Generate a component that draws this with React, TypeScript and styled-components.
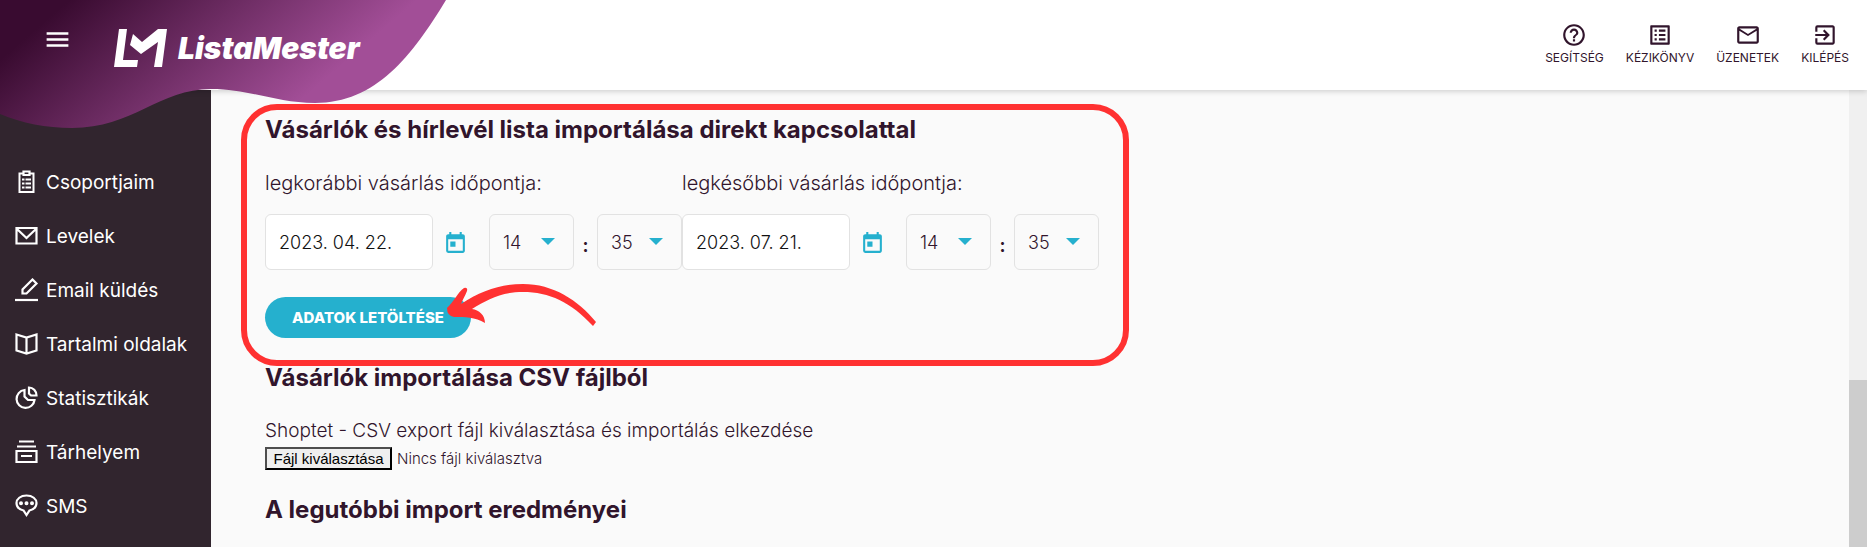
import React from 'react';
import styled, { createGlobalStyle } from 'styled-components';
import { MdMenu, MdHelpOutline, MdOutlineListAlt, MdOutlineMail, MdOutlineExitToApp, MdToday } from 'react-icons/md';

const GlobalStyle = createGlobalStyle`
  *, *::before, *::after { box-sizing: border-box; }
  body {
    margin: 0;
    background: #fafafa;
    color: #31152c;
    font-family: Inter, "Open Sans", sans-serif;
    font-size: 19px;
    font-weight: 300;
  }
  h2, p, ul { margin: 0; padding: 0; }
  button, input, select { font: inherit; color: inherit; margin: 0; }
`;

const Page = styled.div`
  position: relative;
  display: flex;
  flex-direction: column;
  min-height: 100vh;
`;

const Header = styled.header`
  position: relative;
  z-index: 1;
  display: flex;
  align-items: flex-start;
  justify-content: space-between;
  height: 90px;
  padding: 0 18px 0 43px;
  background: #fff;
  box-shadow: 0 1px 6px rgba(0, 0, 0, 0.2);
`;

const Wave = styled.svg`
  position: absolute;
  top: 0;
  left: 0;
`;

const Brand = styled.div`
  position: relative;
  display: flex;
  align-items: flex-start;
  gap: 42px;
  color: #fff;
`;

const MenuButton = styled.button`
  display: flex;
  margin-top: 25px;
  padding: 0;
  border: 0;
  background: none;
  color: #fff;
  cursor: pointer;
`;

const LogoLink = styled.a`
  display: flex;
  align-items: center;
  gap: 11px;
  margin-top: 29px;
  color: #fff;
  text-decoration: none;
  font-size: 30px;
  font-style: italic;
  font-weight: 900;
  line-height: 38px;
`;

const TopNav = styled.nav`
  display: flex;
  gap: 22px;
  padding-top: 22px;
`;

const TopLink = styled.a`
  display: flex;
  flex-direction: column;
  align-items: center;
  color: #31152c;
  font-size: 12px;
  font-weight: 400;
  line-height: 20px;
  text-decoration: none;
  text-transform: uppercase;
`;

const Body = styled.div`
  display: flex;
  flex: 1;
`;

const Sidebar = styled.nav`
  flex: none;
  width: 211px;
  padding-top: 65px;
  background: #31252e;
`;

const SideList = styled.ul`
  list-style: none;
`;

const SideLink = styled.a`
  display: flex;
  align-items: center;
  gap: 7px;
  height: 54px;
  padding-left: 15px;
  color: #fff;
  font-size: 19px;
  font-weight: 400;
  text-decoration: none;
  white-space: nowrap;
`;

const Content = styled.main`
  flex: 1;
  padding: 14px 30px;
`;

const Callout = styled.section`
  position: relative;
  width: 888px;
  height: 262px;
  padding: 8px 18px;
  border: 6px solid #ff3131;
  border-radius: 36px;
`;

const Section = styled.section`
  padding: 0 24px;
`;

const Title = styled.h2`
  font-size: 24px;
  font-weight: 700;
  line-height: 24px;
  white-space: nowrap;
`;

const DateRow = styled.div`
  display: flex;
  margin-top: 29px;
`;

const Moment = styled.fieldset`
  width: 417px;
  margin: 0;
  padding: 0;
  border: 0;
`;

const Caption = styled.label`
  display: block;
  font-size: 20px;
  line-height: 24px;
`;

const Fields = styled.div`
  display: flex;
  align-items: center;
  margin-top: 19px;
`;

const DateInput = styled.input`
  width: 168px;
  height: 56px;
  padding: 0 13px;
  border: 1px solid #e2e2e2;
  border-radius: 6px;
  background: #fff;
  color: #111;
  font-size: 18px;
`;

const CalendarButton = styled.button`
  display: flex;
  margin: 3px 21px 0 10px;
  padding: 0;
  border: 0;
  background: none;
  color: #25b0ce;
  cursor: pointer;
`;

const SelectBox = styled.div`
  position: relative;
  width: 85px;
`;

const Select = styled.select`
  width: 100%;
  height: 56px;
  padding: 0 13px;
  border: 1px solid #e2e2e2;
  border-radius: 6px;
  background: transparent;
  appearance: none;
  font-size: 18px;
`;

const Caret = styled.svg`
  position: absolute;
  top: 24px;
  right: 19px;
  pointer-events: none;
`;

const Colon = styled.span`
  width: 23px;
  padding-top: 6px;
  text-align: center;
  font-size: 18px;
  font-weight: 700;
`;

const PrimaryButton = styled.button`
  display: block;
  width: 206px;
  height: 41px;
  margin-top: 27px;
  padding: 0;
  border: 0;
  border-radius: 21px;
  background: #25b0ce;
  color: #fff;
  font-size: 15px;
  font-weight: 800;
  text-transform: uppercase;
  cursor: pointer;
`;

const Arrow = styled.svg`
  position: absolute;
  top: 172px;
  left: 198px;
`;

const FileRow = styled.div`
  display: flex;
  align-items: center;
  gap: 5px;
  margin-bottom: 28px;
  font-size: 15px;
  line-height: 19px;
`;

const FileInput = styled.input`
  position: absolute;
  width: 1px;
  height: 1px;
  opacity: 0;
`;

const FileLabel = styled.label`
  width: 127px;
  border: 2px outset #000;
  border-color: #4e4e4e #000 #000 #4e4e4e;
  background: #efefef;
  color: #000;
  font: 15px/19px "Liberation Sans", Arial, sans-serif;
  text-align: center;
`;

const FileIntro = styled.p`
  margin: 26px 0 1px;
  font-size: 19px;
  line-height: 30px;
`;

const ScrollTrack = styled.div`
  flex: none;
  width: 18px;
  padding-top: 290px;
  display: flex;
  background: #f0f0f0;
`;

const ScrollThumb = styled.div`
  flex: 1;
  background: #cdcdcd;
`;

const LogoMark = () => (
  <svg width="53" height="38" viewBox="0 0 53 38" fill="#fff" aria-hidden="true">
    <path d="M5 0h8L9 31h15l-1 7H0z" />
    <path d="M19 5l9 8L44 0h9l-5 38h-8l4-25-17 12L16 16z" />
  </svg>
);

type IconProps = { children: React.ReactNode };
const SideIcon = ({ children }: IconProps) => (
  <svg width="24" height="24" viewBox="0 0 24 24" fill="none" stroke="#fff" strokeWidth="2.2" aria-hidden="true">
    {children}
  </svg>
);

const sideItems = [
  {
    label: 'Csoportjaim',
    icon: (
      <>
        <path d="M8 3.500H4.500v18.500h14v-18.500H15" strokeWidth="2" />
        <path d="M8.500 1.500h6v3.500h-6z" />
        <path d="M7 9.500h2.500M10.500 9.500H16M7 13.500h2.500M10.500 13.500H16M7 17.500h2.500M10.500 17.500H16" strokeWidth="2" />
      </>
    ),
  },
  { label: 'Levelek', icon: <path d="M1.500 4h20v15.500h-20zM2 5l9.500 9L21 5" /> },
  {
    label: 'Email küldés',
    icon: (
      <>
        <path d="M0 22h23" />
        <path d="M7.500 15.500v-4L17.500 1.500l4 4L11.500 15.500z" />
      </>
    ),
  },
  { label: 'Tartalmi oldalak', icon: <path d="M1.500 2.500l10 3 10-3v16l-10 3-10-3zM11.500 5v17" /> },
  {
    label: 'Statisztikák',
    icon: (
      <>
        <path d="M9.500 4a9 9 0 1 0 10 10H13l-3.500-3.500z" />
        <path d="M14 1.500c4 0 7.500 3.500 7.500 8H16l-2-2z" />
      </>
    ),
  },
  { label: 'Tárhelyem', icon: <path d="M4 1.500h15M2 6.500h19M1.500 11h20v11h-20zM6 16h11" /> },
  {
    label: 'SMS',
    icon: (
      <>
        <path d="M11.500 1.500C5.500 1.500 1.500 5 1.500 9c0 4 3 6.500 7 7.500l3 4.500 3-4.500c4-1 7-3.500 7-7.500 0-4-4-7.500-10-7.500z" />
        <path d="M6 9.200h.01M11.500 9.200h.01M17 9.200h.01" strokeWidth="4" strokeLinecap="round" />
      </>
    ),
  },
];

type MomentProps = { id: string; caption: string; date: string };
const MomentField = ({ id, caption, date }: MomentProps) => (
  <Moment>
    <Caption htmlFor={id}>{caption}</Caption>
    <Fields>
      <DateInput id={id} type="text" defaultValue={date} />
      <CalendarButton type="button" aria-label="Naptár">
        <MdToday size={25} />
      </CalendarButton>
      <TimeSelect label="Óra" value="14" />
      <Colon>:</Colon>
      <TimeSelect label="Perc" value="35" />
    </Fields>
  </Moment>
);

const TimeSelect = ({ label, value }: { label: string; value: string }) => (
  <SelectBox>
    <Select aria-label={label} defaultValue={value}>
      <option>{value}</option>
    </Select>
    <Caret width="14" height="7" viewBox="0 0 14 7">
      <path d="M0 0h14L7 7z" fill="#25b0ce" />
    </Caret>
  </SelectBox>
);

export default function App() {
  return (
    <Page>
      <GlobalStyle />
      <Header>
        <Wave width="446" height="130" viewBox="0 0 446 130" aria-hidden="true">
          <defs>
            <linearGradient id="plum" gradientUnits="userSpaceOnUse" x1="30" y1="34" x2="178" y2="206">
              <stop offset="0" stopColor="#390b30" />
              <stop offset="1" stopColor="#a24e97" />
            </linearGradient>
          </defs>
          <path
            d="M0 0H446C412 56 376 103 315 103C276 103 250 89 211 89C160 89 132 128 72 128C46 128 22 123 0 114Z"
            fill="url(#plum)"
          />
        </Wave>
        <Brand>
          <MenuButton type="button" aria-label="Menü">
            <MdMenu size={29} />
          </MenuButton>
          <LogoLink href="#">
            <LogoMark />
            ListaMester
          </LogoLink>
        </Brand>
        <TopNav>
          <TopLink href="#"><MdHelpOutline size={26} />Segítség</TopLink>
          <TopLink href="#"><MdOutlineListAlt size={26} />Kézikönyv</TopLink>
          <TopLink href="#"><MdOutlineMail size={26} />Üzenetek</TopLink>
          <TopLink href="#"><MdOutlineExitToApp size={26} />Kilépés</TopLink>
        </TopNav>
      </Header>
      <Body>
        <Sidebar>
          <SideList>
            {sideItems.map((item) => (
              <li key={item.label}>
                <SideLink href="#">
                  <SideIcon>{item.icon}</SideIcon>
                  {item.label}
                </SideLink>
              </li>
            ))}
          </SideList>
        </Sidebar>
        <Content>
          <Callout>
            <Title>Vásárlók és hírlevél lista importálása direkt kapcsolattal</Title>
            <DateRow>
              <MomentField id="from" caption="legkorábbi vásárlás időpontja:" date="2023. 04. 22." />
              <MomentField id="to" caption="legkésőbbi vásárlás időpontja:" date="2023. 07. 21." />
            </DateRow>
            <PrimaryButton type="button">Adatok letöltése</PrimaryButton>
            <Arrow width="160" height="52" viewBox="0 0 160 52" aria-hidden="true">
              <path
                d="M2 26C8 21 13 10 19 6Q23 5 22 9C20 14 18 17 16 22C36 9 56 2 78 2C108 2 133 18 151 40L148 44C126 20 104 10 78 10C56 10 42 18 27 27C34 28 40 33 40 41C30 35 20 35 9 35Q2 34 2 26Z"
                fill="#ff3131"
              />
            </Arrow>
          </Callout>
          <Section>
            <Title>Vásárlók importálása CSV fájlból</Title>
            <FileIntro>Shoptet - CSV export fájl kiválasztása és importálás elkezdése</FileIntro>
            <FileRow>
              <FileInput id="csv" type="file" />
              <FileLabel htmlFor="csv">Fájl kiválasztása</FileLabel>
              Nincs fájl kiválasztva
            </FileRow>
            <Title>A legutóbbi import eredményei</Title>
          </Section>
        </Content>
        <ScrollTrack>
          <ScrollThumb />
        </ScrollTrack>
      </Body>
    </Page>
  );
}
